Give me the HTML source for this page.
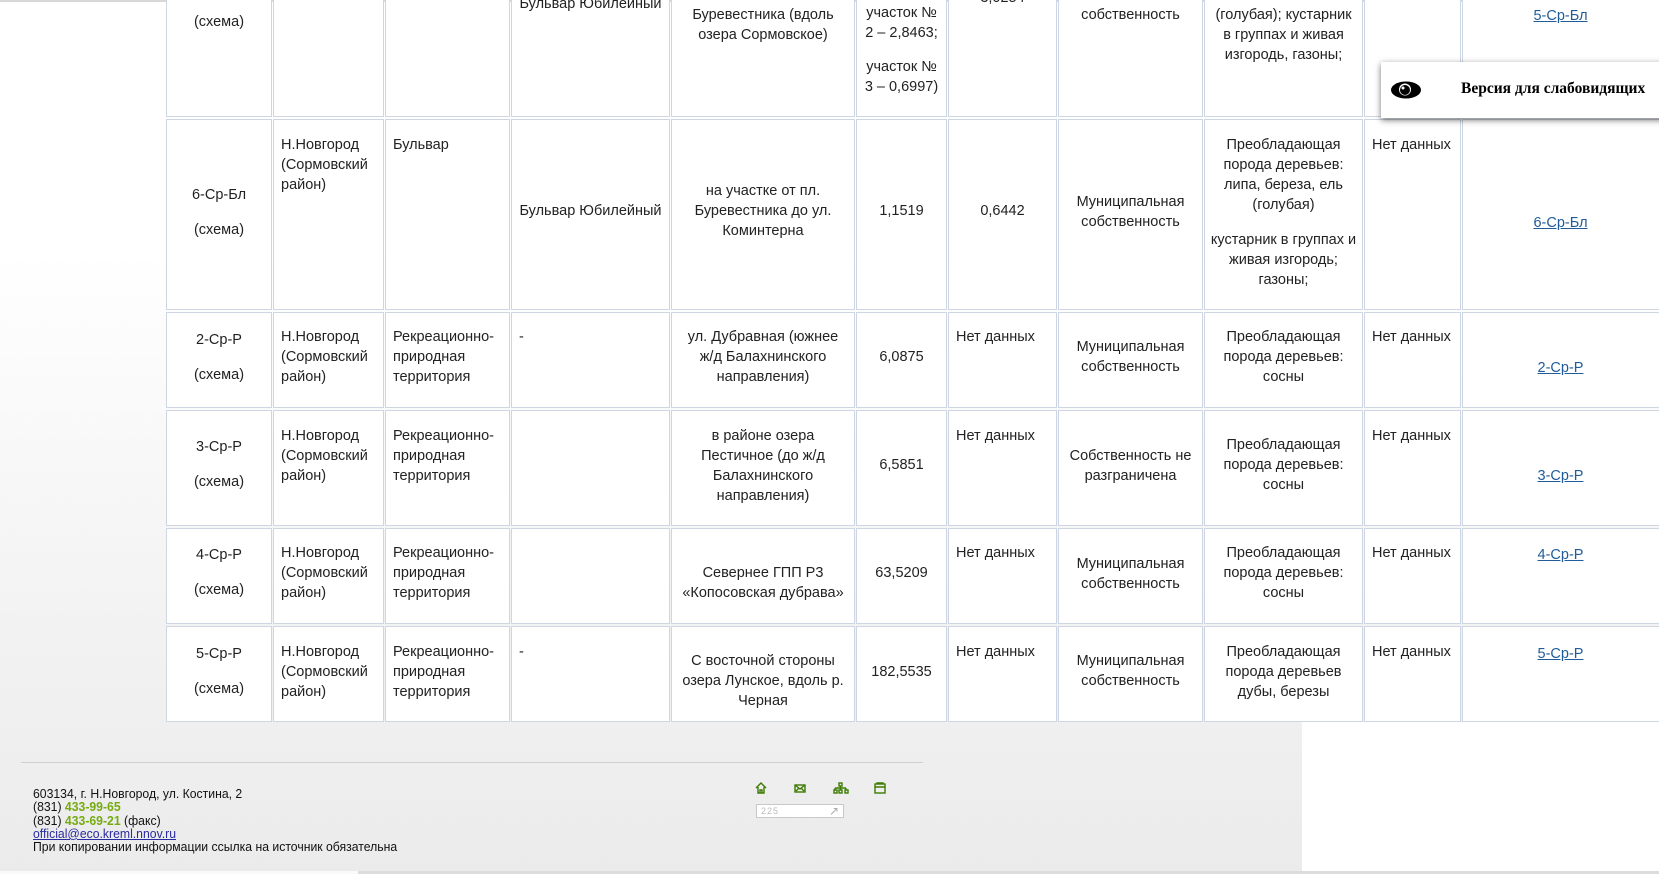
<!DOCTYPE html>
<html><head><meta charset="utf-8">
<style>
*{margin:0;padding:0;box-sizing:border-box}
html,body{width:1659px;height:874px;overflow:hidden}
body{position:relative;font-family:"Liberation Sans",Arial,sans-serif;color:#222;
background:linear-gradient(to bottom,#fff 0,#fff 250px,#f3f3f3 600px,#ebebeb 874px)}
.c{position:absolute;background:#fff;border:1px solid #cfd6e3}
.t{position:absolute;font-size:14.5px;line-height:20px;text-align:center;white-space:nowrap}
.l{text-align:left;padding-left:8px}
a{color:#1f5c99;text-decoration:underline}
.ft{position:absolute;left:33px;top:787px;font-size:13px;line-height:13.3px;color:#111;transform:scaleX(0.94);transform-origin:left}
.g{color:#76ab12;font-weight:bold}
</style></head><body>
<div style="position:absolute;left:0;top:0;width:1659px;height:2px;background:#d8d8d8"></div>
<div style="position:absolute;left:1302px;top:722px;width:357px;height:150px;background:#fff"></div>
<div style="position:absolute;left:0;top:871px;width:1659px;height:3px;background:#fafafa"></div>
<div style="position:absolute;left:358px;top:871px;width:1301px;height:3px;background:#dcdcdc"></div>

<div class="c" style="left:166px;top:-10px;width:106px;height:127px"></div>
<div class="c" style="left:273px;top:-10px;width:111px;height:127px"></div>
<div class="c" style="left:385px;top:-10px;width:125px;height:127px"></div>
<div class="c" style="left:511px;top:-10px;width:159px;height:127px"></div>
<div class="c" style="left:671px;top:-10px;width:184px;height:127px"></div>
<div class="c" style="left:856px;top:-10px;width:91px;height:127px"></div>
<div class="c" style="left:948px;top:-10px;width:109px;height:127px"></div>
<div class="c" style="left:1058px;top:-10px;width:145px;height:127px"></div>
<div class="c" style="left:1204px;top:-10px;width:159px;height:127px"></div>
<div class="c" style="left:1364px;top:-10px;width:97px;height:127px"></div>
<div class="c" style="left:1462px;top:-10px;width:210px;height:127px"></div>

<div class="c" style="left:166px;top:119px;width:106px;height:191px"></div>
<div class="c" style="left:273px;top:119px;width:111px;height:191px"></div>
<div class="c" style="left:385px;top:119px;width:125px;height:191px"></div>
<div class="c" style="left:511px;top:119px;width:159px;height:191px"></div>
<div class="c" style="left:671px;top:119px;width:184px;height:191px"></div>
<div class="c" style="left:856px;top:119px;width:91px;height:191px"></div>
<div class="c" style="left:948px;top:119px;width:109px;height:191px"></div>
<div class="c" style="left:1058px;top:119px;width:145px;height:191px"></div>
<div class="c" style="left:1204px;top:119px;width:159px;height:191px"></div>
<div class="c" style="left:1364px;top:119px;width:97px;height:191px"></div>
<div class="c" style="left:1462px;top:119px;width:210px;height:191px"></div>

<div class="c" style="left:166px;top:312px;width:106px;height:96px"></div>
<div class="c" style="left:273px;top:312px;width:111px;height:96px"></div>
<div class="c" style="left:385px;top:312px;width:125px;height:96px"></div>
<div class="c" style="left:511px;top:312px;width:159px;height:96px"></div>
<div class="c" style="left:671px;top:312px;width:184px;height:96px"></div>
<div class="c" style="left:856px;top:312px;width:91px;height:96px"></div>
<div class="c" style="left:948px;top:312px;width:109px;height:96px"></div>
<div class="c" style="left:1058px;top:312px;width:145px;height:96px"></div>
<div class="c" style="left:1204px;top:312px;width:159px;height:96px"></div>
<div class="c" style="left:1364px;top:312px;width:97px;height:96px"></div>
<div class="c" style="left:1462px;top:312px;width:210px;height:96px"></div>

<div class="c" style="left:166px;top:410px;width:106px;height:116px"></div>
<div class="c" style="left:273px;top:410px;width:111px;height:116px"></div>
<div class="c" style="left:385px;top:410px;width:125px;height:116px"></div>
<div class="c" style="left:511px;top:410px;width:159px;height:116px"></div>
<div class="c" style="left:671px;top:410px;width:184px;height:116px"></div>
<div class="c" style="left:856px;top:410px;width:91px;height:116px"></div>
<div class="c" style="left:948px;top:410px;width:109px;height:116px"></div>
<div class="c" style="left:1058px;top:410px;width:145px;height:116px"></div>
<div class="c" style="left:1204px;top:410px;width:159px;height:116px"></div>
<div class="c" style="left:1364px;top:410px;width:97px;height:116px"></div>
<div class="c" style="left:1462px;top:410px;width:210px;height:116px"></div>

<div class="c" style="left:166px;top:528px;width:106px;height:96px"></div>
<div class="c" style="left:273px;top:528px;width:111px;height:96px"></div>
<div class="c" style="left:385px;top:528px;width:125px;height:96px"></div>
<div class="c" style="left:511px;top:528px;width:159px;height:96px"></div>
<div class="c" style="left:671px;top:528px;width:184px;height:96px"></div>
<div class="c" style="left:856px;top:528px;width:91px;height:96px"></div>
<div class="c" style="left:948px;top:528px;width:109px;height:96px"></div>
<div class="c" style="left:1058px;top:528px;width:145px;height:96px"></div>
<div class="c" style="left:1204px;top:528px;width:159px;height:96px"></div>
<div class="c" style="left:1364px;top:528px;width:97px;height:96px"></div>
<div class="c" style="left:1462px;top:528px;width:210px;height:96px"></div>

<div class="c" style="left:166px;top:626px;width:106px;height:96px"></div>
<div class="c" style="left:273px;top:626px;width:111px;height:96px"></div>
<div class="c" style="left:385px;top:626px;width:125px;height:96px"></div>
<div class="c" style="left:511px;top:626px;width:159px;height:96px"></div>
<div class="c" style="left:671px;top:626px;width:184px;height:96px"></div>
<div class="c" style="left:856px;top:626px;width:91px;height:96px"></div>
<div class="c" style="left:948px;top:626px;width:109px;height:96px"></div>
<div class="c" style="left:1058px;top:626px;width:145px;height:96px"></div>
<div class="c" style="left:1204px;top:626px;width:159px;height:96px"></div>
<div class="c" style="left:1364px;top:626px;width:97px;height:96px"></div>
<div class="c" style="left:1462px;top:626px;width:210px;height:96px"></div>

<!-- row 0 -->
<div class="t" style="left:166px;width:106px;top:12px">(схема)</div>
<div class="t" style="left:511px;width:159px;top:-6px">Бульвар Юбилейный</div>
<div class="t" style="left:671px;width:184px;top:5px">Буревестника (вдоль<br>озера Сормовское)</div>
<div class="t" style="left:856px;width:91px;top:3px">участок №<br>2 – 2,8463;</div>
<div class="t" style="left:856px;width:91px;top:57px">участок №<br>3 – 0,6997)</div>
<div class="t" style="left:948px;width:109px;top:-12px">3,0254</div>
<div class="t" style="left:1058px;width:145px;top:5px">собственность</div>
<div class="t" style="left:1204px;width:159px;top:5px">(голубая); кустарник<br>в группах и живая<br>изгородь, газоны;</div>
<div class="t" style="left:1462px;width:197px;top:6px"><a>5-Ср-Бл</a></div>

<!-- row 1 -->
<div class="t" style="left:166px;width:106px;top:185px">6-Ср-Бл</div>
<div class="t" style="left:166px;width:106px;top:220px">(схема)</div>
<div class="t l" style="left:273px;top:135px">Н.Новгород<br>(Сормовский<br>район)</div>
<div class="t l" style="left:385px;top:135px">Бульвар</div>
<div class="t" style="left:511px;width:159px;top:201px">Бульвар Юбилейный</div>
<div class="t" style="left:671px;width:184px;top:181px">на участке от пл.<br>Буревестника до ул.<br>Коминтерна</div>
<div class="t" style="left:856px;width:91px;top:201px">1,1519</div>
<div class="t" style="left:948px;width:109px;top:201px">0,6442</div>
<div class="t" style="left:1058px;width:145px;top:192px">Муниципальная<br>собственность</div>
<div class="t" style="left:1204px;width:159px;top:135px">Преобладающая<br>порода деревьев:<br>липа, береза, ель<br>(голубая)</div>
<div class="t" style="left:1204px;width:159px;top:230px">кустарник в группах и<br>живая изгородь;<br>газоны;</div>
<div class="t l" style="left:1364px;top:135px">Нет данных</div>
<div class="t" style="left:1462px;width:197px;top:213px"><a>6-Ср-Бл</a></div>

<!-- row 2 -->
<div class="t" style="left:166px;width:106px;top:330px">2-Ср-Р</div>
<div class="t" style="left:166px;width:106px;top:365px">(схема)</div>
<div class="t l" style="left:273px;top:327px">Н.Новгород<br>(Сормовский<br>район)</div>
<div class="t l" style="left:385px;top:327px">Рекреационно-<br>природная<br>территория</div>
<div class="t l" style="left:511px;top:327px">-</div>
<div class="t" style="left:671px;width:184px;top:327px">ул. Дубравная (южнее<br>ж/д Балахнинского<br>направления)</div>
<div class="t" style="left:856px;width:91px;top:347px">6,0875</div>
<div class="t l" style="left:948px;top:327px">Нет данных</div>
<div class="t" style="left:1058px;width:145px;top:337px">Муниципальная<br>собственность</div>
<div class="t" style="left:1204px;width:159px;top:327px">Преобладающая<br>порода деревьев:<br>сосны</div>
<div class="t l" style="left:1364px;top:327px">Нет данных</div>
<div class="t" style="left:1462px;width:197px;top:358px"><a>2-Ср-Р</a></div>

<!-- row 3 -->
<div class="t" style="left:166px;width:106px;top:437px">3-Ср-Р</div>
<div class="t" style="left:166px;width:106px;top:472px">(схема)</div>
<div class="t l" style="left:273px;top:426px">Н.Новгород<br>(Сормовский<br>район)</div>
<div class="t l" style="left:385px;top:426px">Рекреационно-<br>природная<br>территория</div>
<div class="t" style="left:671px;width:184px;top:426px">в районе озера<br>Пестичное (до ж/д<br>Балахнинского<br>направления)</div>
<div class="t" style="left:856px;width:91px;top:455px">6,5851</div>
<div class="t l" style="left:948px;top:426px">Нет данных</div>
<div class="t" style="left:1058px;width:145px;top:446px">Собственность не<br>разграничена</div>
<div class="t" style="left:1204px;width:159px;top:435px">Преобладающая<br>порода деревьев:<br>сосны</div>
<div class="t l" style="left:1364px;top:426px">Нет данных</div>
<div class="t" style="left:1462px;width:197px;top:466px"><a>3-Ср-Р</a></div>

<!-- row 4 -->
<div class="t" style="left:166px;width:106px;top:545px">4-Ср-Р</div>
<div class="t" style="left:166px;width:106px;top:580px">(схема)</div>
<div class="t l" style="left:273px;top:543px">Н.Новгород<br>(Сормовский<br>район)</div>
<div class="t l" style="left:385px;top:543px">Рекреационно-<br>природная<br>территория</div>
<div class="t" style="left:671px;width:184px;top:563px">Севернее ГПП Р3<br>«Копосовская дубрава»</div>
<div class="t" style="left:856px;width:91px;top:563px">63,5209</div>
<div class="t l" style="left:948px;top:543px">Нет данных</div>
<div class="t" style="left:1058px;width:145px;top:554px">Муниципальная<br>собственность</div>
<div class="t" style="left:1204px;width:159px;top:543px">Преобладающая<br>порода деревьев:<br>сосны</div>
<div class="t l" style="left:1364px;top:543px">Нет данных</div>
<div class="t" style="left:1462px;width:197px;top:545px"><a>4-Ср-Р</a></div>

<!-- row 5 -->
<div class="t" style="left:166px;width:106px;top:644px">5-Ср-Р</div>
<div class="t" style="left:166px;width:106px;top:679px">(схема)</div>
<div class="t l" style="left:273px;top:642px">Н.Новгород<br>(Сормовский<br>район)</div>
<div class="t l" style="left:385px;top:642px">Рекреационно-<br>природная<br>территория</div>
<div class="t l" style="left:511px;top:642px">-</div>
<div class="t" style="left:671px;width:184px;top:651px">С восточной стороны<br>озера Лунское, вдоль р.<br>Черная</div>
<div class="t" style="left:856px;width:91px;top:662px">182,5535</div>
<div class="t l" style="left:948px;top:642px">Нет данных</div>
<div class="t" style="left:1058px;width:145px;top:651px">Муниципальная<br>собственность</div>
<div class="t" style="left:1204px;width:159px;top:642px">Преобладающая<br>порода деревьев<br>дубы, березы</div>
<div class="t l" style="left:1364px;top:642px">Нет данных</div>
<div class="t" style="left:1462px;width:197px;top:644px"><a>5-Ср-Р</a></div>

<!-- popup -->
<div style="position:absolute;left:1381px;top:62px;width:290px;height:56px;background:#fff;box-shadow:0 2px 6px rgba(0,0,0,.55)">
<svg style="position:absolute;left:9px;top:17px" width="32" height="22" viewBox="0 0 32 22"><ellipse cx="16" cy="11" rx="15" ry="8.5" fill="#000"/><circle cx="15" cy="10.5" r="6" fill="#fff"/><circle cx="15" cy="11" r="5" fill="#000"/><circle cx="13" cy="9" r="1.5" fill="#fff"/></svg>
<div style="position:absolute;left:80px;top:18px;font-family:'Liberation Serif',serif;font-weight:bold;font-size:15.5px;white-space:nowrap;color:#000">Версия для слабовидящих</div>
</div>

<!-- footer -->
<div style="position:absolute;left:21px;top:762px;width:902px;height:1px;background:#cfcfcf"></div>
<div class="ft">603134, г. Н.Новгород, ул. Костина, 2<br>(831) <span class="g">433-99-65</span><br>(831) <span class="g">433-69-21</span> (факс)<br><a style="color:#2a2aa0">official@eco.kreml.nnov.ru</a><br>При копировании информации ссылка на источник обязательна</div>
<svg style="position:absolute;left:755px;top:782px" width="135" height="14" viewBox="0 0 135 14" fill="none" stroke="#3d7a00" stroke-width="1.4">
<path d="M1 6 L6 1 L11 6 M3 5 V11 H9 V5 M5 11 V8 H7 V11"/>
<rect x="40" y="3" width="10" height="7"/><path d="M40 3 L45 7 L50 3 M41 9 L44 6 M49 9 L46 6"/>
<rect x="84" y="1" width="3" height="3"/><path d="M85.5 4 V6 M80 6 H91 M80 6 V8 M85.5 6 V8 M91 6 V8"/><rect x="79" y="8" width="3" height="3"/><rect x="84" y="8" width="3" height="3"/><rect x="90" y="8" width="3" height="3"/>
<rect x="120" y="2" width="10" height="9"/><path d="M120 5 H130 M122 2 V1 H128 V2"/>
</svg>
<div style="position:absolute;left:756px;top:804px;width:88px;height:14px;background:#fff;border:1px solid #c8c8c8;font-size:9px;color:#bbb;padding-left:4px;line-height:12px;letter-spacing:1px">225
<span style="position:absolute;right:3px;top:0;color:#aaa;font-size:12px">&#8599;</span></div>
</body></html>
